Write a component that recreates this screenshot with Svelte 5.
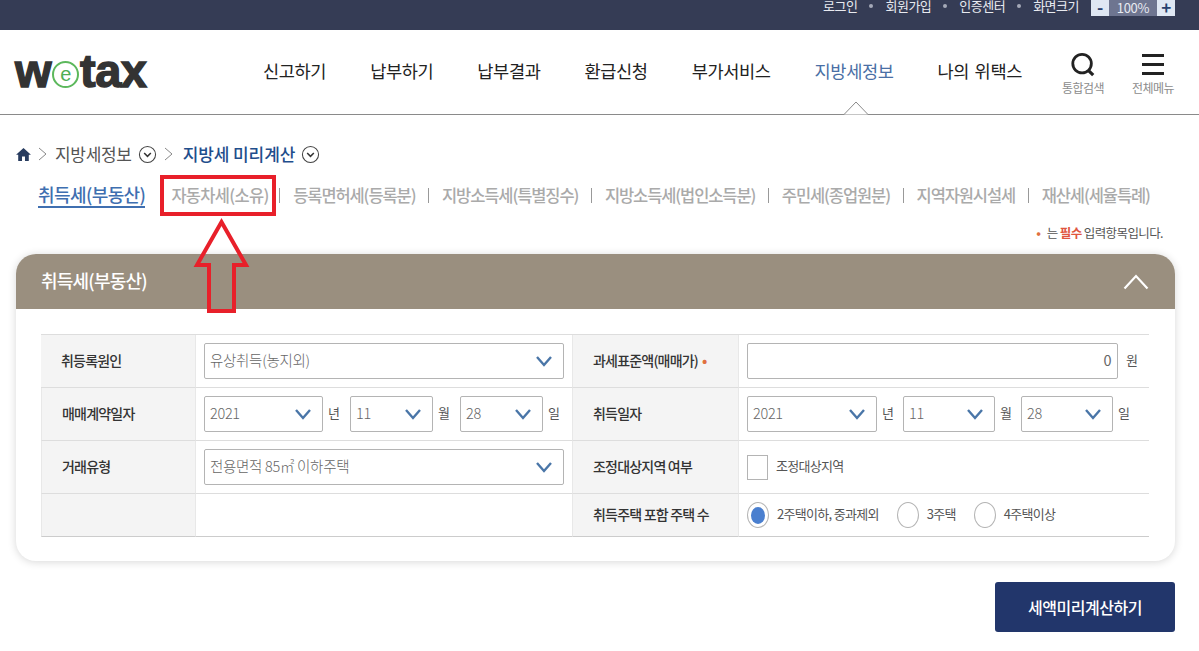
<script>
const menus = ["신고하기", "납부하기", "납부결과", "환급신청", "부가서비스", "지방세정보", "나의 위택스"];
const tabs = ["등록면허세(등록분)", "지방소득세(특별징수)", "지방소득세(법인소득분)", "주민세(종업원분)", "지역자원시설세", "재산세(세율특례)"];
</script>

{#snippet chevron()}
	<svg class="chevron" viewBox="0 0 18 12" aria-hidden="true">
		<path d="M2 2 L9 10 L16 2" fill="none" stroke="#4a76a8" stroke-width="2.4" />
	</svg>
{/snippet}

{#snippet circleDown()}
	<svg class="circle-down" viewBox="0 0 20 20" aria-hidden="true">
		<circle cx="10" cy="10" r="8.5" fill="none" stroke="#444" stroke-width="1.1" />
		<path d="M6.5 8.5 L10 12 L13.5 8.5" fill="none" stroke="#333" stroke-width="1.6" />
	</svg>
{/snippet}

{#snippet crumbSep()}
	<svg class="crumb-sep" viewBox="0 0 9 14" aria-hidden="true">
		<path d="M1 1 L8 7 L1 13" fill="none" stroke="#888" stroke-width="1" />
	</svg>
{/snippet}

{#snippet dateFields()}
	<div class="select year"><span>2021</span>{@render chevron()}</div>
	<span class="unit">년</span>
	<div class="select day"><span>11</span>{@render chevron()}</div>
	<span class="unit">월</span>
	<div class="select day"><span>28</span>{@render chevron()}</div>
	<span class="unit">일</span>
{/snippet}

<div class="page">
	<div class="topbar">
		<span>로그인</span><i></i>
		<span>회원가입</span><i></i>
		<span>인증센터</span><i></i>
		<span>화면크기</span>
		<div class="zoom">
			<b class="zoom-btn">-</b>
			<span class="zoom-value">100%</span>
			<b class="zoom-btn">+</b>
		</div>
	</div>

	<header class="header">
		<div class="logo">
			<span>w</span>
			<span class="logo-e">e</span>
			<span>tax</span>
		</div>
		<nav class="menu">
			{#each menus as menu}
				<span class:active={menu === "지방세정보"}>{menu}</span>
			{/each}
		</nav>
		<div class="tool search">
			<svg viewBox="0 0 28 28" aria-hidden="true">
				<circle cx="13" cy="12.5" r="10" fill="none" stroke="#222" stroke-width="3" />
				<path d="M20 20 L25 25" stroke="#222" stroke-width="3.4" />
			</svg>
			<span>통합검색</span>
		</div>
		<div class="tool all">
			<svg viewBox="0 0 24 28" aria-hidden="true">
				<path d="M1 4.5 H23 M1 13.5 H23 M1 22.5 H23" stroke="#222" stroke-width="3" />
			</svg>
			<span>전체메뉴</span>
		</div>
		<svg class="notch" viewBox="0 0 26 14" aria-hidden="true">
			<path d="M0 13.5 H1 L13 1 L25 13.5 H26" fill="#fff" stroke="#8a8a8a" stroke-width="1" />
		</svg>
	</header>

	<div class="crumbs">
		<svg class="home" viewBox="0 0 16 14" aria-hidden="true">
			<path d="M8 0 L16 7.4 H13.7 V14 H9.6 V9.2 H6.4 V14 H2.3 V7.4 H0 Z" fill="#283c5f" />
		</svg>
		{@render crumbSep()}
		<span class="crumb">지방세정보</span>
		{@render circleDown()}
		{@render crumbSep()}
		<strong class="crumb current">지방세 미리계산</strong>
		{@render circleDown()}
	</div>

	<div class="tabs">
		<span class="tab first">취득세(부동산)</span>
		<span class="tab second">자동차세(소유)</span>
		{#each tabs as tab}
			<i class="tab-sep"></i>
			<span class="tab">{tab}</span>
		{/each}
	</div>

	<p class="note"><em>•</em> 는 <b>필수</b> 입력항목입니다.</p>

	<section class="panel">
		<div class="panel-head">
			<h2>취득세(부동산)</h2>
			<svg viewBox="0 0 26 16" aria-hidden="true">
				<path d="M1.5 14.5 L13 2 L24.5 14.5" fill="none" stroke="#fff" stroke-width="2.2" />
			</svg>
		</div>
		<div class="form">
			<div class="th">취등록원인</div>
			<div class="td">
				<div class="select wide"><span>유상취득(농지외)</span>{@render chevron()}</div>
			</div>
			<div class="th">과세표준액(매매가) <em class="req">•</em></div>
			<div class="td">
				<div class="input">0</div>
				<span class="unit won">원</span>
			</div>

			<div class="th">매매계약일자</div>
			<div class="td dates left">{@render dateFields()}</div>
			<div class="th">취득일자</div>
			<div class="td dates right">{@render dateFields()}</div>

			<div class="th">거래유형</div>
			<div class="td">
				<div class="select wide"><span>전용면적 85㎡ 이하주택</span>{@render chevron()}</div>
			</div>
			<div class="th">조정대상지역 여부</div>
			<div class="td">
				<span class="checkbox"></span>
				<span class="opt check-label">조정대상지역</span>
			</div>

			<div class="th last"></div>
			<div class="td last"></div>
			<div class="th last">취득주택 포함 주택 수</div>
			<div class="td last radios">
				<span class="radio on"></span><span class="opt">2주택이하, 중과제외</span>
				<span class="radio"></span><span class="opt">3주택</span>
				<span class="radio"></span><span class="opt">4주택이상</span>
			</div>
		</div>
	</section>

	<div class="actions">
		<button type="button">세액미리계산하기</button>
	</div>

	<!-- red annotation drawn on top of the screenshot -->
	<div class="mark-box"></div>
	<svg class="mark-arrow" viewBox="0 0 60 100" aria-hidden="true">
		<path d="M28.5 6 L53 49 H41 V95 H16 V49 H4 Z" fill="none" stroke="#e8202a" stroke-width="4" />
	</svg>
</div>

<style>
	:global(body) {
		margin: 0;
		background: #fff;
	}

	.page {
		position: relative;
		width: 1199px;
		height: 651px;
		overflow: hidden;
		font-family: "Noto Sans CJK KR", "Noto Sans", sans-serif;
		color: #333;
		letter-spacing: -0.5px;
	}

	.topbar {
		display: flex;
		align-items: flex-start;
		justify-content: flex-end;
		height: 30px;
		padding-right: 24px;
		background: #353c55;
		color: #e8eaf0;
		font-size: 13px;
		line-height: 12px;
		box-sizing: border-box;
	}

	.topbar > i {
		width: 4px;
		height: 4px;
		margin: 4px 12px 0;
		border-radius: 50%;
		background: #a4a9b8;
	}

	.zoom {
		display: flex;
		height: 16px;
		margin-left: 12px;
	}

	.zoom-btn {
		width: 18px;
		background: #dfe7f3;
		color: #28406e;
		font-size: 17px;
		line-height: 14px;
		text-align: center;
	}

	.zoom-value {
		width: 48px;
		background: #6e7590;
		color: #e8eaf0;
		text-align: center;
		font-size: 13px;
		line-height: 15px;
		letter-spacing: -0.3px;
	}

	.header {
		position: relative;
		display: flex;
		align-items: flex-start;
		height: 85px;
		border-bottom: 1px solid #8a8a8a;
		box-sizing: border-box;
	}

	.logo {
		display: flex;
		align-items: center;
		width: 241px;
		height: 34px;
		margin: 24px 0 0 15px;
		color: #333;
		font-family: "Liberation Sans", sans-serif;
		font-size: 47px;
		font-weight: 700;
		letter-spacing: -0.5px;
		line-height: 34px;
		-webkit-text-stroke: 1.4px #333;
	}

	.logo-e {
		display: flex;
		align-items: center;
		justify-content: center;
		width: 27px;
		height: 27px;
		margin: 6px 1px 0 1px;
		border: 2px solid #5cb85c;
		border-radius: 50%;
		box-sizing: border-box;
		color: #4fae55;
		font-size: 20px;
		font-weight: 400;
		line-height: 20px;
		-webkit-text-stroke: 0;
	}

	.menu {
		display: flex;
		gap: 44px;
		width: 767px;
		margin: 27px 0 0 7px;
		color: #222;
		font-size: 17.6px;
		line-height: 28px;
		letter-spacing: -0.4px;
		word-spacing: 2px;
		white-space: nowrap;
	}

	.menu .active {
		color: #4a6fa5;
	}

	.tool {
		position: absolute;
		top: 21px;
		display: flex;
		flex-direction: column;
		align-items: center;
		width: 50px;
		color: #8b8b8b;
		font-size: 12px;
		line-height: 14px;
	}

	.tool svg {
		width: 26px;
		height: 28px;
		margin-bottom: 2px;
	}

	.search {
		left: 1058px;
	}

	.all {
		left: 1128px;
	}

	.notch {
		position: absolute;
		left: 843px;
		top: 71px;
		width: 26px;
		height: 14px;
	}

	.crumbs {
		display: flex;
		align-items: center;
		height: 24px;
		margin: 27px 0 0 16px;
		font-size: 17px;
		line-height: 24px;
		letter-spacing: -0.3px;
	}

	.home {
		width: 15px;
		height: 13px;
	}

	.crumb-sep {
		width: 9px;
		height: 14px;
		margin: 0 8px 0 7px;
	}

	.crumb {
		color: #555;
		font-weight: 400;
	}

	.crumb.current {
		margin-left: 2px;
		color: #1f4e8c;
		font-weight: 500;
		letter-spacing: -0.1px;
	}

	.circle-down {
		width: 19px;
		height: 19px;
		margin-left: 6px;
	}

	.tabs {
		display: flex;
		align-items: center;
		height: 30px;
		margin: 14px 0 0 38px;
		color: #aaa;
		font-size: 16.5px;
		font-weight: 500;
		line-height: 24px;
		white-space: nowrap;
	}

	.tab {
		letter-spacing: -1.1px;
	}

	.tab.first {
		color: #3f6fb0;
		font-size: 18px;
		letter-spacing: -0.6px;
		border-bottom: 2px solid #3f6fb0;
		margin-right: 26px;
	}

	.tab.second {
		margin-right: -2px;
		letter-spacing: -0.7px;
	}

	.tab-sep {
		width: 1px;
		height: 15px;
		margin: 0 12.8px;
		background: #999;
	}

	.note {
		margin: 15px 36px 0 0;
		color: #555;
		font-size: 12.5px;
		line-height: 16px;
		text-align: right;
		letter-spacing: -0.6px;
	}

	.note em,
	.req {
		color: #e0703f;
		font-style: normal;
		font-weight: 700;
	}

	.note em {
		margin-right: 4px;
	}

	.note b {
		color: #e0563f;
	}

	.panel {
		width: 1159px;
		height: 307px;
		margin: 13px 0 0 16px;
		border-radius: 20px;
		box-shadow: 0 1px 8px rgba(0, 0, 0, 0.16);
		overflow: hidden;
	}

	.panel-head {
		display: flex;
		align-items: center;
		justify-content: space-between;
		height: 55px;
		padding: 0 26px 0 25px;
		background: #9a8f7f;
	}

	.panel-head h2 {
		margin: 0 0 3px;
		color: #fff;
		font-size: 18px;
		font-weight: 500;
		letter-spacing: -0.8px;
	}

	.panel-head svg {
		width: 26px;
		height: 16px;
	}

	.form {
		display: grid;
		grid-template-columns: 155px 376px 167px 410px;
		grid-template-rows: 53px 53px 53px 43px;
		width: 1108px;
		margin: 25px 0 0 25px;
		border-top: 1px solid #ddd;
		box-sizing: border-box;
	}

	.th {
		display: flex;
		align-items: center;
		gap: 4px;
		padding: 0 0 3px 20px;
		background: #f4f4f4;
		border-bottom: 1px solid #ddd;
		border-right: 1px solid #e8e8e8;
		color: #333;
		font-size: 14px;
		font-weight: 500;
		letter-spacing: -0.8px;
		white-space: nowrap;
	}

	.td {
		display: flex;
		align-items: center;
		padding-left: 8px;
		border-bottom: 1px solid #ddd;
		font-size: 14px;
		color: #666;
	}

	.td + .th {
		border-left: 1px solid #e8e8e8;
		padding-left: 20px;
	}

	.th.last,
	.td.last {
		border-bottom-color: #ccc;
	}

	.select,
	.input {
		height: 36px;
		border: 1px solid #b4b4b4;
		border-radius: 2px;
		box-sizing: border-box;
		background: #fff;
		color: #666;
		font-size: 14.5px;
	}

	.select {
		display: flex;
		align-items: center;
		justify-content: space-between;
		padding: 0 10px 0 5px;
		letter-spacing: -0.3px;
		font-weight: 300;
	}

	.select > span,
	.unit,
	.opt {
		margin-bottom: 3px;
	}

	.select.wide {
		width: 360px;
	}

	.left .select.year {
		width: 119px;
	}

	.left .select.day {
		width: 83px;
	}

	.left .unit {
		width: 27px;
	}

	.right .select.year {
		width: 130px;
	}

	.right .select.day {
		width: 92px;
	}

	.right .unit {
		width: 26px;
	}

	.chevron {
		width: 18px;
		height: 12px;
	}

	.input {
		width: 371px;
		padding-right: 6px;
		line-height: 32px;
		text-align: right;
	}

	.unit {
		flex-shrink: 0;
		box-sizing: border-box;
		padding-left: 5px;
		font-size: 13px;
		color: #555;
	}

	.unit.won {
		width: 22px;
		padding-left: 8px;
	}

	.checkbox {
		width: 21px;
		height: 25px;
		border: 1px solid #b4b4b4;
		box-sizing: border-box;
		background: #fff;
	}

	.opt {
		font-size: 13px;
		color: #555;
		letter-spacing: -0.7px;
		white-space: nowrap;
	}

	.check-label {
		margin-left: 8px;
	}

	.radio {
		display: flex;
		align-items: center;
		justify-content: center;
		width: 22px;
		height: 26px;
		margin-right: 8px;
		border: 1px solid #b4b4b4;
		border-radius: 50%;
		box-sizing: border-box;
	}

	.radio.on::after {
		content: "";
		width: 14px;
		height: 17px;
		border-radius: 50%;
		background: #4a7fcf;
	}

	.radios .opt {
		margin-right: 18px;
	}

	.actions {
		display: flex;
		justify-content: flex-end;
		margin: 21px 24px 0 0;
	}

	.actions button {
		width: 180px;
		height: 50px;
		padding: 0;
		border: 0;
		border-radius: 3px;
		background: #22366b;
		color: #fff;
		font: inherit;
		font-size: 16px;
		font-weight: 500;
		letter-spacing: -0.5px;
	}

	.mark-box {
		position: absolute;
		left: 160px;
		top: 175px;
		width: 116px;
		height: 41px;
		border: 4px solid #e8202a;
		box-sizing: border-box;
	}

	.mark-arrow {
		position: absolute;
		left: 193px;
		top: 216px;
		width: 60px;
		height: 100px;
	}
</style>
